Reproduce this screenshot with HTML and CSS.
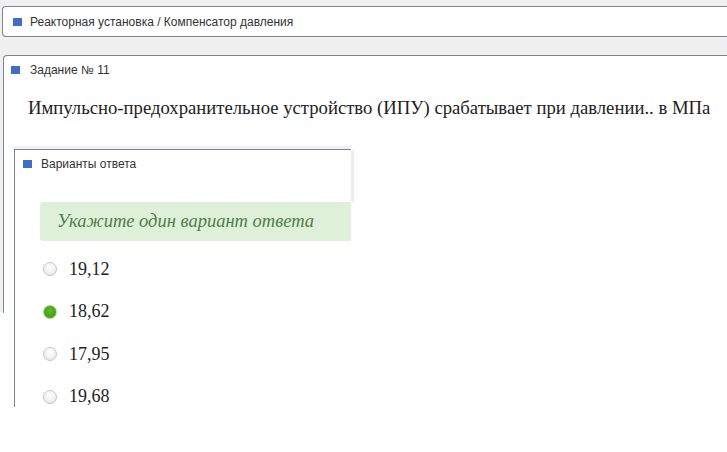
FILE: index.html
```html
<!DOCTYPE html>
<html lang="ru">
<head>
<meta charset="utf-8">
<title>Задание № 11</title>
<link rel="stylesheet" href="styles.css">
</head>
<body>
  <div class="top">
    <div class="crumb">
      <span class="mark"></span>
      <span class="crumb-text">Реакторная установка / Компенсатор давления</span>
    </div>
  </div>

  <div class="task-area">
    <section class="task">
      <div class="task-head">
        <span class="mark"></span>
        <span class="head-text">Задание № 11</span>
      </div>
      <p class="question">Импульсно-предохранительное устройство (ИПУ) срабатывает при давлении.. в МПа</p>

      <div class="answers">
        <div class="answers-head">
          <span class="mark"></span>
          <span class="head-text">Варианты ответа</span>
        </div>
        <div class="hint">Укажите один вариант ответа</div>
        <ul class="options">
          <li class="option"><span class="radio"></span><span class="value">19,12</span></li>
          <li class="option"><span class="radio checked"></span><span class="value">18,62</span></li>
          <li class="option"><span class="radio"></span><span class="value">17,95</span></li>
          <li class="option"><span class="radio"></span><span class="value">19,68</span></li>
        </ul>
      </div>
    </section>
  </div>
</body>
</html>
```

FILE: styles.css
```css
html {
  overflow: hidden;
  background: #ffffff;
}

body {
  margin: 0;
  padding: 0;
  min-height: 452px;
  font-family: "Liberation Sans", Arial, sans-serif;
  color: #333333;
}

.mark {
  display: inline-block;
  width: 9px;
  height: 8px;
  background: #3f6fc2;
  flex: none;
}

.head-text,
.crumb-text {
  font-size: 12px;
  color: #333333;
}

/* breadcrumb strip */
.top {
  background: #f0f0f0;
  padding: 6px 0 18px 2px;
}

.crumb {
  display: flex;
  align-items: center;
  gap: 8px;
  height: 29px;
  padding-left: 10px;
  background: #ffffff;
  border: 1px solid #7d8199;
  border-right: none;
  border-radius: 4px 0 0 4px;
}

/* task card */
.task-area {
  background: #f0f0f0;
  padding-left: 3px;
  height: 257px;
}

.task {
  height: 100%;
  background: #ffffff;
  border-top: 1px solid #7d8199;
  border-left: 1px solid #7d8199;
  border-top-left-radius: 4px;
}

.task-head {
  display: flex;
  align-items: center;
  gap: 10px;
  height: 28px;
  padding: 0 0 0 7px;
}

.question {
  margin: 13px 0 0 24px;
  font-family: "Liberation Serif", "Times New Roman", serif;
  font-size: 18.7px;
  line-height: 22px;
  color: #222222;
  white-space: nowrap;
}

/* answers panel */
.answers {
  width: 336px;
  height: 257px;
  margin: 30px 0 0 10px;
  background: #ffffff;
  border-top: 1px solid #7d8199;
  border-left: 1px solid #7d8199;
  box-shadow: 0 -3px 0 #f0f0f2;
}

.answers-head {
  display: flex;
  align-items: center;
  gap: 9px;
  height: 28px;
  padding-left: 8px;
  margin-right: -3px;
  padding-bottom: 24px;
  border-right: 3px solid #ededed;
}

.hint {
  margin-left: 25px;
  height: 39px;
  display: flex;
  align-items: center;
  padding-left: 17px;
  background: #dff0d8;
  border-radius: 3px 0 0 3px;
  font-family: "Liberation Serif", "Times New Roman", serif;
  font-style: italic;
  font-size: 18.5px;
  color: #4f7d4b;
}

.options {
  list-style: none;
  margin: 7px 0 0 28px;
  padding: 0;
}

.option {
  display: flex;
  align-items: center;
  gap: 12px;
  height: 42.5px;
}

/* custom radio dots */
.radio {
  width: 12px;
  height: 12px;
  border-radius: 50%;
  border: 1px solid #c6c6c6;
  background: radial-gradient(circle at 50% 35%, #ffffff 0%, #f1f1f1 55%, #e0e0e0 100%);
  flex: none;
}

.radio.checked {
  border-color: #a9d592;
  background: radial-gradient(circle at 50% 40%, #5cb82a 0%, #47a016 70%, #3f9512 100%);
}

.value {
  font-family: "Liberation Serif", "Times New Roman", serif;
  font-size: 18px;
  color: #222222;
}
```
